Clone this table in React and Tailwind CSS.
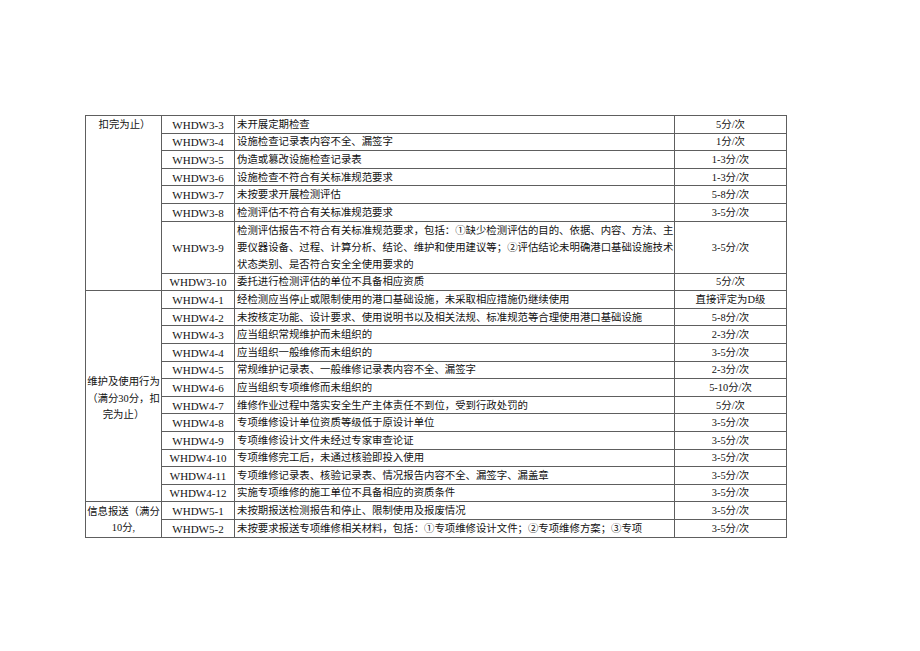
const rows3 = [
  ['WHDW3-3', '未开展定期检查', '5分/次'],
  ['WHDW3-4', '设施检查记录表内容不全、漏签字', '1分/次'],
  ['WHDW3-5', '伪造或篡改设施检查记录表', '1-3分/次'],
  ['WHDW3-6', '设施检查不符合有关标准规范要求', '1-3分/次'],
  ['WHDW3-7', '未按要求开展检测评估', '5-8分/次'],
  ['WHDW3-8', '检测评估不符合有关标准规范要求', '3-5分/次'],
]

const rows4 = [
  ['WHDW4-1', '经检测应当停止或限制使用的港口基础设施，未采取相应措施仍继续使用', '直接评定为D级'],
  ['WHDW4-2', '未按核定功能、设计要求、使用说明书以及相关法规、标准规范等合理使用港口基础设施', '5-8分/次'],
  ['WHDW4-3', '应当组织常规维护而未组织的', '2-3分/次'],
  ['WHDW4-4', '应当组织一般维修而未组织的', '3-5分/次'],
  ['WHDW4-5', '常规维护记录表、一般维修记录表内容不全、漏签字', '2-3分/次'],
  ['WHDW4-6', '应当组织专项维修而未组织的', '5-10分/次'],
  ['WHDW4-7', '维修作业过程中落实安全生产主体责任不到位，受到行政处罚的', '5分/次'],
  ['WHDW4-8', '专项维修设计单位资质等级低于原设计单位', '3-5分/次'],
  ['WHDW4-9', '专项维修设计文件未经过专家审查论证', '3-5分/次'],
  ['WHDW4-10', '专项维修完工后，未通过核验即投入使用', '3-5分/次'],
  ['WHDW4-11', '专项维修记录表、核验记录表、情况报告内容不全、漏签字、漏盖章', '3-5分/次'],
  ['WHDW4-12', '实施专项维修的施工单位不具备相应的资质条件', '3-5分/次'],
]

const cell = 'border border-[#5e5e5e] p-0 align-middle'

function CodeCell({ children }) {
  return <td className={`${cell} text-center text-[11px] leading-[13px] pt-[2px]`}>{children}</td>
}

function DescCell({ children }) {
  return <td className={`${cell} text-left pl-[2px] pt-[1px] whitespace-nowrap overflow-hidden`}>{children}</td>
}

function ScoreCell({ children }) {
  return <td className={`${cell} text-center pt-[1px]`}>{children}</td>
}

function Row({ code, desc, score, first, h = 'h-[17.6px]' }) {
  return (
    <tr className={h}>
      {first}
      <CodeCell>{code}</CodeCell>
      <DescCell>{desc}</DescCell>
      <ScoreCell>{score}</ScoreCell>
    </tr>
  )
}

export default function App() {
  return (
    <div className="w-[920px] h-[651px] bg-white pt-[115px] pl-[85px] text-[#111] font-['Liberation_Serif','Noto_Sans_CJK_SC',serif] text-[10.4px] leading-[14px]">
      <table className="table-fixed border-collapse w-[701px]">
        <colgroup>
          <col className="w-[76px]" />
          <col className="w-[73px]" />
          <col className="w-[440px]" />
          <col className="w-[112px]" />
        </colgroup>
        <tbody>
          {rows3.map(([code, desc, score], i) => (
            <Row
              key={code}
              code={code}
              desc={desc}
              score={score}
              first={
                i === 0 ? (
                  <td rowSpan={8} className={`${cell} align-top text-center pt-[2px] pl-[2px]`}>
                    扣完为止）
                  </td>
                ) : null
              }
            />
          ))}
          <tr className="h-[52px]">
            <CodeCell>WHDW3-9</CodeCell>
            <td className={`${cell} text-left pl-[2px] pr-[2px] overflow-hidden leading-[17px]`}>
              <div className="text-justify [text-align-last:justify] whitespace-nowrap">
                检测评估报告不符合有关标准规范要求，包括：①缺少检测评估的目的、依据、内容、方法、主
              </div>
              <div className="text-justify [text-align-last:justify] whitespace-nowrap">
                要仪器设备、过程、计算分析、结论、维护和使用建议等；②评估结论未明确港口基础设施技术
              </div>
              <div className="whitespace-nowrap">状态类别、是否符合安全全使用要求的</div>
            </td>
            <ScoreCell>3-5分/次</ScoreCell>
          </tr>
          <Row code="WHDW3-10" desc="委托进行检测评估的单位不具备相应资质" score="5分/次" />

          {rows4.map(([code, desc, score], i) => (
            <Row
              key={code}
              code={code}
              desc={desc}
              score={score}
              first={
                i === 0 ? (
                  <td rowSpan={12} className={`${cell} text-center leading-[16.5px] pt-[6px]`}>
                    维护及使用行为
                    <br />
                    （满分30分，扣
                    <br />
                    完为止）
                  </td>
                ) : null
              }
            />
          ))}

          <Row
            code="WHDW5-1"
            desc="未按期报送检测报告和停止、限制使用及报废情况"
            score="3-5分/次"
            first={
              <td rowSpan={2} className={`${cell} text-center leading-[16px] pt-[1px]`}>
                信息报送（满分
                <br />
                10分,
              </td>
            }
          />
          <Row
            code="WHDW5-2"
            desc="未按要求报送专项维修相关材料，包括：①专项维修设计文件；②专项维修方案；③专项"
            score="3-5分/次"
            h="h-[18.4px]"
          />
        </tbody>
      </table>
    </div>
  )
}
